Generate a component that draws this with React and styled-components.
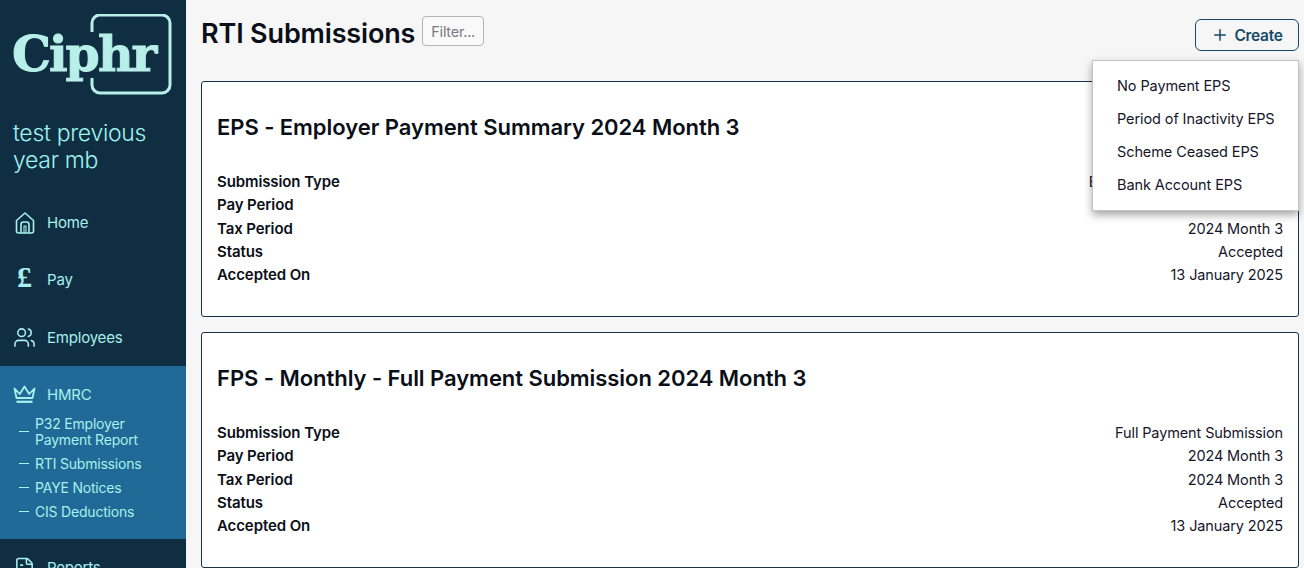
import React from 'react';
import styled, { createGlobalStyle } from 'styled-components';
import { Users, FileText, Plus } from 'lucide-react';

const GlobalStyle = createGlobalStyle`
  html, body {
    margin: 0;
    height: 100%;
    overflow: hidden;
    background: #f6f6f6;
    font-family: Inter, "Noto Sans", sans-serif;
    color: #0b1622;
  }
`;

const Page = styled.div`
  display: flex;
  height: 568px;
  overflow: hidden;
`;

const Sidebar = styled.aside`
  flex: 0 0 186px;
  background: #102e42;
  color: #a8f0ec;
  overflow: hidden;
`;

const Logo = styled.svg`
  display: block;
  margin: 14px 0 0 12px;
`;

const SiteName = styled.div`
  margin: 25px 0 0 13px;
  font-size: 23px;
  font-weight: 300;
  line-height: 27px;
  letter-spacing: -0.3px;
  color: #9ff3f0;
`;

const NavList = styled.nav`
  margin-top: 20px;
`;

const NavItem = styled.div`
  display: flex;
  align-items: center;
  gap: 11px;
  height: 57.33px;
  padding-left: 13px;
  font-size: 15px;
  letter-spacing: -0.2px;
  color: #a8f0ec;
`;

const NavIcon = styled.span`
  display: flex;
  flex: 0 0 23px;
  min-width: 0;
  justify-content: center;
`;

const PoundGlyph = styled.span`
  font-family: "Liberation Serif", serif;
  font-size: 30px;
  font-weight: 700;
  line-height: 30px;
  margin-top: -6px;
`;

const ActiveGroup = styled.div`
  background: #216a97;
  height: 173px;
`;

const GroupHead = styled(NavItem)`
  height: 58px;
  margin-bottom: -8px;
`;

const SubItem = styled.div`
  display: flex;
  align-items: center;
  margin-bottom: 8px;
  padding: 0 34px 0 19px;
  font-size: 14px;
  line-height: 16px;
  letter-spacing: -0.2px;
  color: #a8f0ec;
  &::before {
    content: '';
    flex: 0 0 10px;
    height: 1px;
    margin-right: 6px;
    background: #a8f0ec;
  }
`;

const Main = styled.main`
  position: relative;
  flex: 1;
  padding: 0 5px 0 15px;
`;

const Header = styled.header`
  display: flex;
  align-items: flex-start;
  height: 81px;
`;

const Title = styled.h1`
  margin: 17px 0 0;
  font-size: 27px;
  font-weight: 600;
  line-height: 34px;
  letter-spacing: -0.15px;
  color: #0a0f18;
`;

const FilterInput = styled.input`
  width: 62px;
  height: 30px;
  box-sizing: border-box;
  margin: 16px 0 0 7px;
  padding: 0 8px;
  border: 1px solid #b5b5b5;
  border-radius: 4px;
  background: #f9f9f9;
  font-family: inherit;
  font-size: 14.5px;
  letter-spacing: -0.25px;
  &::placeholder {
    color: #7b7b7f;
    opacity: 1;
  }
`;

const CreateButton = styled.button`
  display: flex;
  align-items: center;
  justify-content: center;
  gap: 5px;
  width: 104px;
  height: 32px;
  margin: 19px 0 0 auto;
  border: 1px solid #154a66;
  border-radius: 6px;
  background: #f6f6f6;
  color: #154a66;
  font-family: inherit;
  font-size: 15.5px;
  font-weight: 600;
  letter-spacing: -0.3px;
`;

const Menu = styled.div`
  position: absolute;
  top: 60px;
  right: 5px;
  z-index: 2;
  box-sizing: border-box;
  width: 207px;
  height: 151px;
  padding: 8px 0 0 24px;
  background: #fff;
  border: 1px solid #c4c4c4;
  box-shadow: 0 4px 8px rgba(0, 0, 0, 0.35);
`;

const MenuItem = styled.div`
  height: 33px;
  font-size: 14.5px;
  line-height: 33px;
  letter-spacing: -0.1px;
  color: #16162a;
`;

const Card = styled.section`
  box-sizing: border-box;
  height: 236px;
  margin-bottom: 15px;
  padding: 0 15px;
  background: #fff;
  border: 1px solid #17324a;
  border-radius: 3px;
`;

const CardTitle = styled.h2`
  margin: 29px 0 28px;
  padding-top: 1px;
  font-size: 22px;
  font-weight: 600;
  line-height: 30px;
  letter-spacing: -0.05px;
  color: #0a0f18;
`;

const Row = styled.div`
  display: flex;
  justify-content: space-between;
  height: 23.3px;
  font-size: 14.5px;
  line-height: 23px;
  letter-spacing: -0.12px;
  color: #16162a;
`;

const RowLabel = styled.span`
  font-size: 15px;
  font-weight: 600;
  letter-spacing: -0.1px;
  color: #0a0f18;
`;

const submissions = [
  {
    title: 'EPS - Employer Payment Summary 2024 Month 3',
    type: 'Employer Payment Summary',
  },
  {
    title: 'FPS - Monthly - Full Payment Submission 2024 Month 3',
    type: 'Full Payment Submission',
  },
];

const subItems = ['P32 Employer Payment Report', 'RTI Submissions', 'PAYE Notices', 'CIS Deductions'];
const menuItems = ['No Payment EPS', 'Period of Inactivity EPS', 'Scheme Ceased EPS', 'Bank Account EPS'];

const HomeIcon = () => (
  <svg width="20" height="22" viewBox="0 0 20 22" fill="none" stroke="currentColor" strokeWidth="1.6" strokeLinejoin="round">
    <path d="M1.5 8.5 10 1l8.5 7.5V19a2 2 0 0 1-2 2h-13a2 2 0 0 1-2-2z" />
    <path d="M6 21v-8.5a2.5 2.5 0 0 1 2.5-2.5h3a2.5 2.5 0 0 1 2.5 2.5V21" />
    <path d="M9 21v-7h2v7" strokeWidth="1.1" />
  </svg>
);

const CrownIcon = () => (
  <svg width="23" height="19" viewBox="0 0 23 19" fill="none" stroke="currentColor" strokeWidth="1.8" strokeLinejoin="round">
    <path d="M1.5 3.5 6.8 9 11.5 1.5 16.2 9l5.3-5.5-2 9.5h-16z" />
    <path d="M3.5 16.8h16" strokeWidth="2.2" />
  </svg>
);

const SubmissionCard = ({ title, type }) => {
  const rows = [
    ['Submission Type', type],
    ['Pay Period', '2024 Month 3'],
    ['Tax Period', '2024 Month 3'],
    ['Status', 'Accepted'],
    ['Accepted On', '13 January 2025'],
  ];

  return (
    <Card>
      <CardTitle>{title}</CardTitle>
      {rows.map(([label, value]) => (
        <Row key={label}>
          <RowLabel>{label}</RowLabel>
          <span>{value}</span>
        </Row>
      ))}
    </Card>
  );
};

const App = () => (
  <Page>
    <GlobalStyle />
    <Sidebar>
      <Logo width="160" height="81" viewBox="0 0 160 81" fill="none">
        <path
          d="M80 18V9a8 8 0 0 1 8-8h62a8 8 0 0 1 8 8v62a8 8 0 0 1-8 8H88a8 8 0 0 1-8-8v-7"
          stroke="#b8efe8"
          strokeWidth="3"
        />
        <text
          x="0"
          y="57"
          fill="#b8efe8"
          stroke="#b8efe8"
          strokeWidth="1"
          fontFamily="'DejaVu Serif', serif"
          fontWeight="700"
          fontSize="49"
          letterSpacing="-2"
        >
          Ciphr
        </text>
      </Logo>
      <SiteName>
        test previous
        <br />
        year mb
      </SiteName>
      <NavList>
        <NavItem>
          <NavIcon><HomeIcon /></NavIcon>
          Home
        </NavItem>
        <NavItem>
          <NavIcon><PoundGlyph>£</PoundGlyph></NavIcon>
          Pay
        </NavItem>
        <NavItem>
          <NavIcon><Users size={25} strokeWidth={1.6} /></NavIcon>
          Employees
        </NavItem>
        <ActiveGroup>
          <GroupHead>
            <NavIcon><CrownIcon /></NavIcon>
            HMRC
          </GroupHead>
          {subItems.map(item => (
            <SubItem key={item}>{item}</SubItem>
          ))}
        </ActiveGroup>
        <NavItem>
          <NavIcon><FileText size={24} strokeWidth={1.6} /></NavIcon>
          Reports
        </NavItem>
      </NavList>
    </Sidebar>
    <Main>
      <Header>
        <Title>RTI Submissions</Title>
        <FilterInput placeholder="Filter..." />
        <CreateButton>
          <Plus size={18} strokeWidth={2} />
          Create
        </CreateButton>
      </Header>
      <Menu>
        {menuItems.map(item => (
          <MenuItem key={item}>{item}</MenuItem>
        ))}
      </Menu>
      {submissions.map(item => (
        <SubmissionCard key={item.title} title={item.title} type={item.type} />
      ))}
    </Main>
  </Page>
);

export default App;
